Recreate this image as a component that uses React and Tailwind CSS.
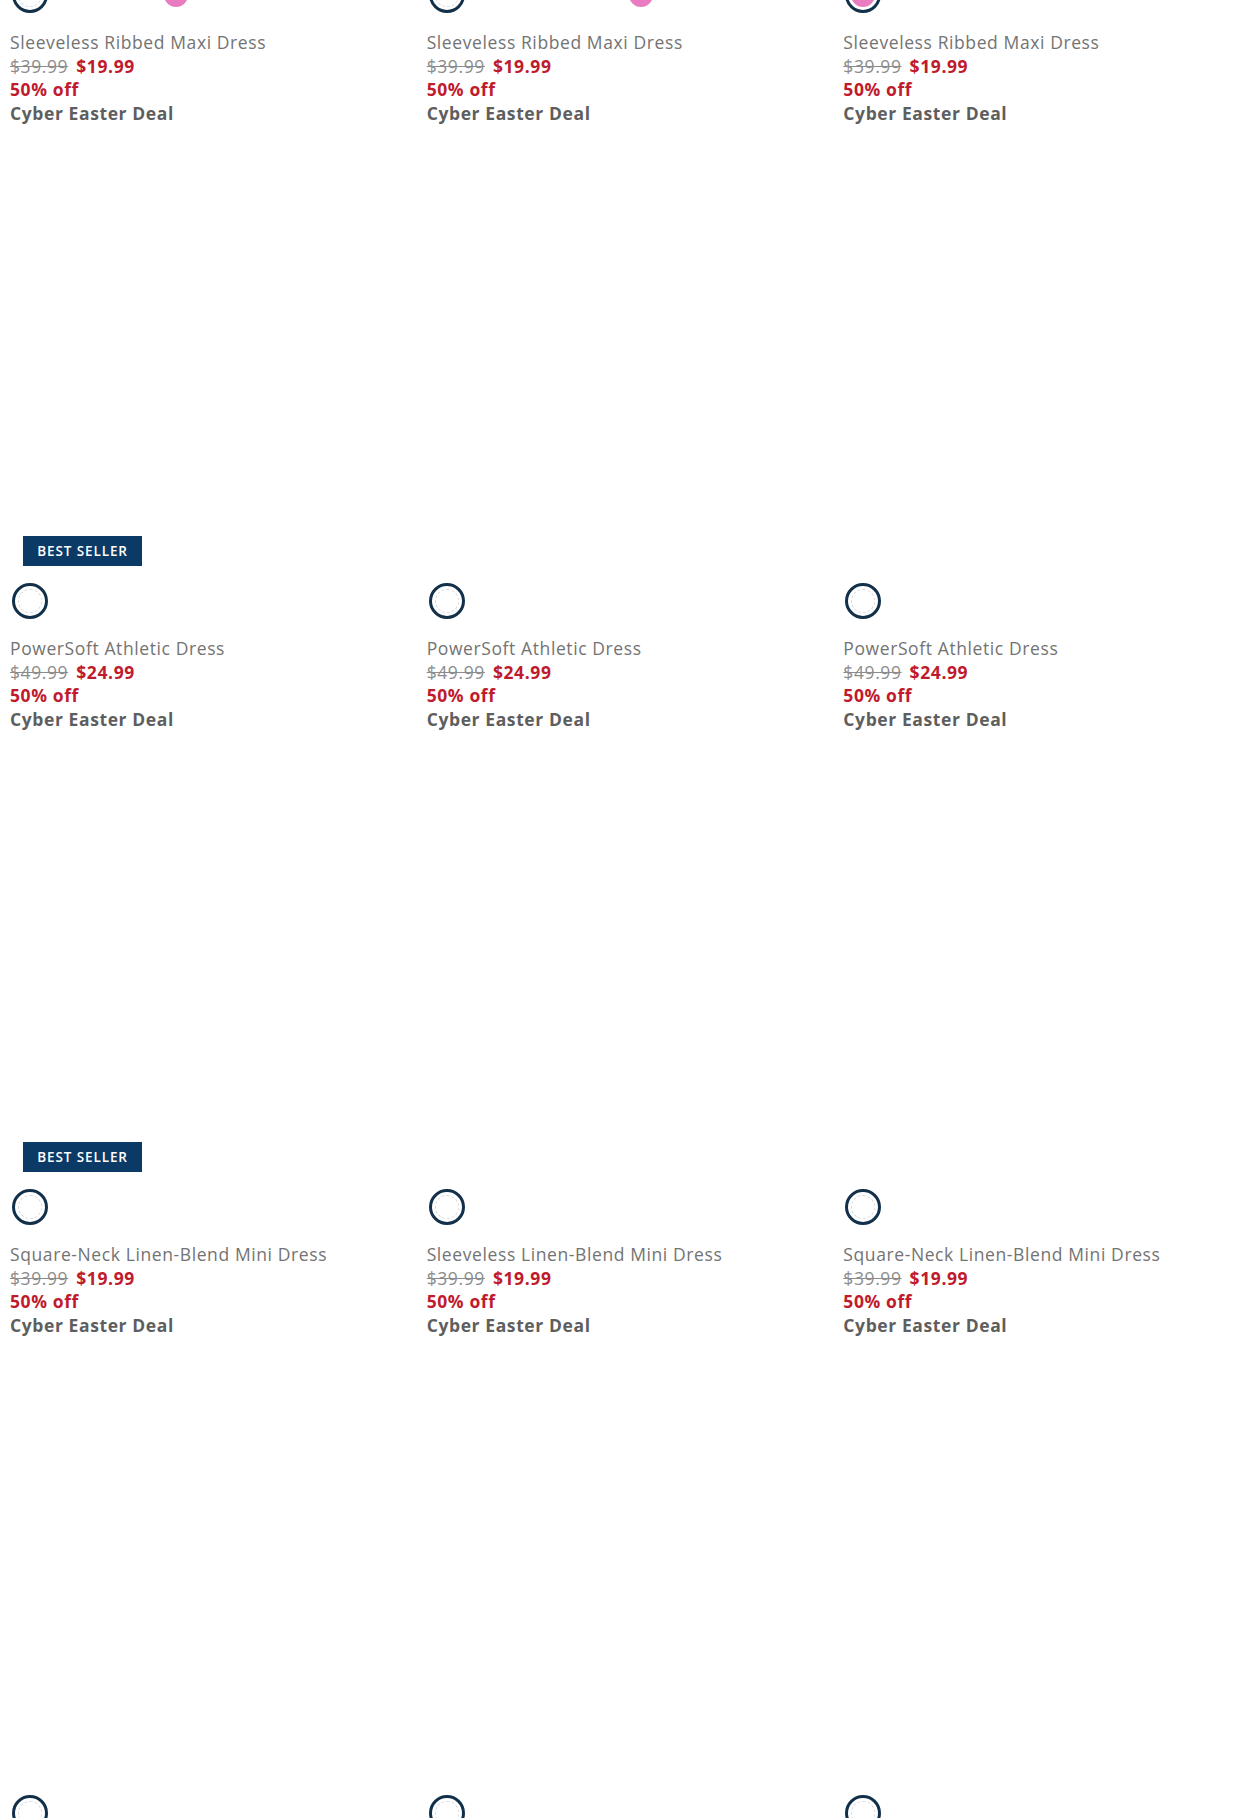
import React from 'react';

const rows = [
  [
    { name: 'Sleeveless Ribbed Maxi Dress', was: '$39.99', now: '$19.99', swatches: ['white', 'white', 'white', 'pink'], selected: 0 },
    { name: 'Sleeveless Ribbed Maxi Dress', was: '$39.99', now: '$19.99', swatches: ['white', 'white', 'white', 'white', 'pink'], selected: 0 },
    { name: 'Sleeveless Ribbed Maxi Dress', was: '$39.99', now: '$19.99', swatches: ['pink'], selected: 0 },
  ],
  [
    { name: 'PowerSoft Athletic Dress', was: '$49.99', now: '$24.99', swatches: ['white'], selected: 0, badge: true },
    { name: 'PowerSoft Athletic Dress', was: '$49.99', now: '$24.99', swatches: ['white'], selected: 0 },
    { name: 'PowerSoft Athletic Dress', was: '$49.99', now: '$24.99', swatches: ['white'], selected: 0 },
  ],
  [
    { name: 'Square-Neck Linen-Blend Mini Dress', was: '$39.99', now: '$19.99', swatches: ['white'], selected: 0, badge: true },
    { name: 'Sleeveless Linen-Blend Mini Dress', was: '$39.99', now: '$19.99', swatches: ['white'], selected: 0 },
    { name: 'Square-Neck Linen-Blend Mini Dress', was: '$39.99', now: '$19.99', swatches: ['white'], selected: 0 },
  ],
  // last row is cut by the bottom of the page, only the swatches show
  [
    { swatches: ['white'], selected: 0 },
    { swatches: ['white'], selected: 0 },
    { swatches: ['white'], selected: 0 },
  ],
];

const Swatch = ({ color, selected }) => (
  <div
    className={`w-[36px] h-[36px] rounded-full border-[3px] p-[3px] ${
      selected ? 'border-[#12304a]' : 'border-transparent'
    }`}
  >
    <div
      className={`w-full h-full rounded-full ${
        color === 'pink'
          ? 'bg-[#e97cc1]'
          : selected
          ? 'bg-white border border-dashed border-[#d6dde3]'
          : 'bg-white'
      }`}
    />
  </div>
);

const ProductCard = ({ product }) => (
  <div className="flex flex-col h-[606px]">
    {/* image area is blank in the screenshot */}
    <div className="h-[441px] flex items-end pl-[23px]">
      {product.badge && (
        <div className="w-[119px] h-[30px] bg-[#0b3a66] text-white text-[13.5px] font-semibold tracking-[0.9px] flex items-center justify-center">
          BEST SELLER
        </div>
      )}
    </div>
    <div className="mt-[17px] pl-[12px] flex gap-[12.7px]">
      {product.swatches.map((c, i) => (
        <Swatch key={i} color={c} selected={i === product.selected} />
      ))}
    </div>
    {product.name && (
      <div className="mt-[18px] pl-[10px] text-[17.5px] leading-[23.5px] tracking-[0.6px]">
        <div className="text-[#737373]">{product.name}</div>
        <div className="flex gap-[8px]">
          <span className="text-[#8c8c8c] line-through">{product.was}</span>
          <span className="text-[#c01b2d] font-bold">{product.now}</span>
        </div>
        <div className="text-[#c01b2d] font-bold">50% off</div>
        <div className="text-[#5e5e5e] font-bold">Cyber Easter Deal</div>
      </div>
    )}
  </div>
);

const App = () => {
  return (
    <div className="w-[1250px] h-[1818px] overflow-hidden bg-white font-['Open_Sans',sans-serif]">
      <div className="grid grid-cols-3 -mt-[481px]">
        {rows.flat().map((product, i) => (
          <ProductCard key={i} product={product} />
        ))}
      </div>
    </div>
  );
};

export default App;
